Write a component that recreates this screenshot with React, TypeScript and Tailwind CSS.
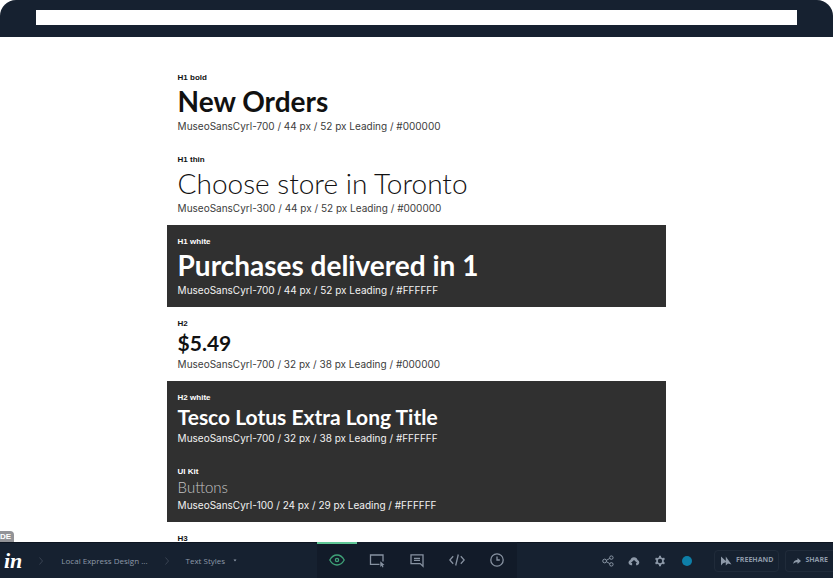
import type { ReactNode } from "react";
import { clsx } from "clsx";

type Style = {
  label: string;
  sample: string;
  meta: string;
  kind: "h1" | "h1thin" | "h2" | "kit";
  dark?: boolean;
};

const styles: Style[] = [
  { label: "H1 bold", sample: "New Orders", meta: "MuseoSansCyrl-700 / 44 px / 52 px Leading / #000000", kind: "h1" },
  { label: "H1 thin", sample: "Choose store in Toronto", meta: "MuseoSansCyrl-300 / 44 px / 52 px Leading / #000000", kind: "h1thin" },
  { label: "H1 white", sample: "Purchases delivered in 1", meta: "MuseoSansCyrl-700 / 44 px / 52 px Leading / #FFFFFF", kind: "h1", dark: true },
  { label: "H2", sample: "$5.49", meta: "MuseoSansCyrl-700 / 32 px / 38 px Leading / #000000", kind: "h2" },
  { label: "H2 white", sample: "Tesco Lotus Extra Long Title", meta: "MuseoSansCyrl-700 / 32 px / 38 px Leading / #FFFFFF", kind: "h2", dark: true },
  { label: "UI Kit", sample: "Buttons", meta: "MuseoSansCyrl-100 / 24 px / 29 px Leading / #FFFFFF", kind: "kit", dark: true },
];

const sampleClass = {
  h1: "text-[28px] leading-[36px] font-bold",
  h1thin: "text-[28px] leading-[36px] font-light",
  h2: "text-[21px] leading-[28px] font-bold",
  kit: "text-[15px] leading-[21px] font-light text-[#c4c4c4]",
};

function StyleRow({ label, sample, meta, kind, dark }: Style) {
  return (
    <section className={clsx("px-[11px] pt-[11px] pb-[9px]", dark ? "bg-[#303030] text-white" : "text-[#111]")}>
      <p className="text-[8px] leading-[11px] font-bold">{label}</p>
      <h2 className={clsx("font-['Lato',sans-serif]", sampleClass[kind])}>{sample}</h2>
      <p className={clsx("font-['Inter',sans-serif] text-[10px] leading-[15px]", dark ? "text-[#f2f2f2]" : "text-[#3c3c3c]")}>{meta}</p>
    </section>
  );
}

function Icon({ children, small }: { children: ReactNode; small?: boolean }) {
  return (
    <svg viewBox="0 0 16 16" fill="none" stroke="currentColor" strokeWidth="1.3" className={small ? "size-3" : "size-4"} aria-hidden="true">
      {children}
    </svg>
  );
}

const modes = [
  {
    name: "Preview",
    icon: (
      <>
        <path d="M.8 8C2.6 4.700 5.100 3 8 3s5.400 1.700 7.200 5c-1.800 3.300-4.300 5-7.200 5S2.600 11.300.8 8z" />
        <circle cx="8" cy="8" r="1.600" />
      </>
    ),
  },
  {
    name: "Build",
    icon: (
      <>
        <path d="M10.500 12.300H1.500V3h12.500v6.500" />
        <path d="M11.300 9.300l4.200 3.700-1.800.3.800 1.700-1 .5-.9-1.800-1.300 1.200z" fill="currentColor" stroke="none" />
      </>
    ),
  },
  {
    name: "Comment",
    icon: (
      <>
        <path d="M2 2.800h12v11.400l-2.800-2.600H2z" />
        <path d="M5 6.300h6M5 8.300h6" />
      </>
    ),
  },
  {
    name: "Inspect",
    icon: <path d="M4.200 4.300L.8 8l3.400 3.700M11.800 4.300L15.200 8l-3.400 3.700M9.300 2.500l-2.600 11" />,
  },
  {
    name: "History",
    icon: (
      <>
        <circle cx="8" cy="8" r="6.200" />
        <path d="M8 4.500V8h2.800" />
      </>
    ),
  },
];

function Chevron() {
  return (
    <svg viewBox="0 0 4 8" className="h-2 w-1 text-[#384352]" fill="none" stroke="currentColor" aria-hidden="true">
      <path d="M.5.5L3.500 4 .5 7.500" />
    </svg>
  );
}

export default function App() {
  return (
    <div className="flex h-screen flex-col overflow-hidden bg-white font-['Liberation_Sans',sans-serif]">
      <header className="shrink-0 rounded-t-2xl bg-[#162130] px-9 pt-[10px] pb-3">
        <input type="text" aria-label="Address" className="block h-[15px] w-full bg-white px-2 text-[10px] outline-none" />
      </header>

      <main className="relative min-h-0 flex-1 overflow-hidden">
        <div className="mx-auto w-3/5 pt-6">
          {styles.map((s) => (
            <StyleRow key={s.label} {...s} />
          ))}
          <p className="px-[11px] pt-[11px] text-[8px] leading-[11px] font-bold text-[#111]">H3</p>
        </div>
        <span className="absolute bottom-0 left-0 rounded-tr-sm bg-[#929397] pr-[3px] text-[8px] leading-[11px] font-bold text-white">DE</span>
      </main>

      <footer className="grid h-9 shrink-0 grid-cols-[1fr_auto_1fr] border-t border-[#0d1521] bg-[#162130] font-['Open_Sans',sans-serif] text-[#8d99a8]">
        <nav aria-label="Breadcrumb" className="flex items-center text-[8px] whitespace-nowrap">
          <a href="#home" aria-label="Home" className="mr-[17px] ml-1 font-['Liberation_Serif',serif] text-[22px] leading-6 font-bold text-white italic">
            in
          </a>
          <Chevron />
          <a href="#project" className="mx-[18px]">Local Express Design ...</a>
          <Chevron />
          <button type="button" className="ml-4 flex items-center gap-2">
            Text Styles
            <svg viewBox="0 0 4 3" className="h-[3px] w-1" fill="currentColor" aria-hidden="true">
              <path d="M.5.5h3L2 2.500z" />
            </svg>
          </button>
        </nav>

        <div className="-mt-px flex bg-[#121b29]">
          {modes.map((m, i) => (
            <button
              key={m.name}
              type="button"
              aria-label={m.name}
              className={clsx("flex w-10 items-center justify-center border-y-2 border-transparent", i === 0 ? "border-t-[#5fc796] text-[#3fa278]" : "text-[#8792a1]")}
            >
              <Icon>{m.icon}</Icon>
            </button>
          ))}
        </div>

        <div className="flex items-center justify-end">
          <div className="flex items-center gap-[14px] pr-[22px]">
            <button type="button" aria-label="Connections">
              <Icon small>
                <circle cx="3.500" cy="8" r="2.500" />
                <circle cx="12.500" cy="3.500" r="2.300" />
                <circle cx="12.500" cy="12.500" r="2.300" />
                <path d="M6 7l4.300-2.400M6 9l4.300 2.400" />
              </Icon>
            </button>
            <button type="button" aria-label="Upload">
              <Icon small>
                <path d="M5.500 13.500H4a3.400 3.400 0 0 1-2.800-5.200 4 4 0 0 1 2-1.500 4.900 4.900 0 0 1 9.600 0 3.500 3.500 0 0 1-.5 6.700h-1.500v-2.700h1.500L8 6.500l-4.300 4.300h1.800z" fill="currentColor" stroke="none" />
              </Icon>
            </button>
            <button type="button" aria-label="Settings">
              <Icon small>
                <circle cx="8" cy="8" r="4" strokeWidth="2.200" />
                <path d="M8 4V1M8 15v-3M4.500 6L2 4.500M14 11.500L11.500 10M4.500 10L2 11.500M14 4.500L11.500 6" strokeWidth="2.600" />
              </Icon>
            </button>
            <button type="button" aria-label="Status" className="ml-0.5 size-[10px] rounded-full bg-[#0e7fa8]" />
          </div>
          <div className="flex gap-[6px] text-[7px] font-bold">
            <button type="button" className="flex h-[22px] items-center gap-1 rounded-sm border border-[#202b3a] px-[5px]">
              <svg viewBox="0 0 12 10" className="h-[10px] w-3" fill="currentColor" aria-hidden="true">
                <path d="M1 .5L5.800 5V.5L11.500 8.500 8 7.500 5.800 9.500V6.200L3 7.200 1 9.500z" />
              </svg>
              FREEHAND
            </button>
            <button type="button" className="flex h-[22px] items-center gap-1 rounded-l-sm border border-r-0 border-[#202b3a] pr-[5px] pl-[7px]">
              <svg viewBox="0 0 8 8" className="size-2" fill="currentColor" aria-hidden="true">
                <path d="M4.500 1L8 4 4.500 7V5.200C2.500 5.100 1.200 5.700.2 7 .4 4.500 1.800 3 4.500 2.800z" />
              </svg>
              SHARE
            </button>
          </div>
        </div>
      </footer>
    </div>
  );
}
